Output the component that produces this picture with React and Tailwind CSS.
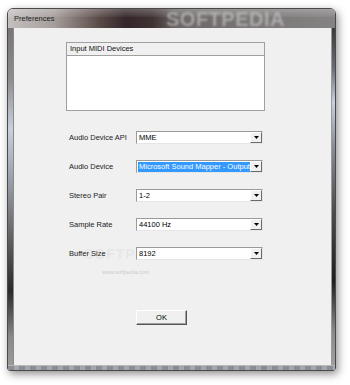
import React from "react";

const font = { fontFamily: '"Liberation Sans", Arial, sans-serif' };

function Combo({ value, selected }) {
  return (
    <div className="w-[127px] h-[13px] flex border border-t-[#9a9a9a] border-l-[#9a9a9a] border-b-[#e6e6e6] border-r-[#e6e6e6] bg-white">
      <div className="flex-1 flex items-center pl-[1px] pr-[1px] overflow-hidden">
        <span
          className={
            "text-[7.5px] leading-[10px] whitespace-nowrap px-[1px] " +
            (selected ? "bg-[#3399ff] text-white flex-1" : "text-black")
          }
        >
          {value}
        </span>
      </div>
      <div className="w-[12px] h-full flex items-center justify-center bg-[#f0f0f0] border border-t-white border-l-white border-b-[#6a6a6a] border-r-[#6a6a6a]">
        <svg width="5" height="3" viewBox="0 0 5 3">
          <path d="M0 0H5L2.5 3Z" fill="#000" />
        </svg>
      </div>
    </div>
  );
}

function Row({ label, value, selected }) {
  return (
    <div className="flex items-center h-[13px]">
      <div className="w-[67px] text-[7.5px] text-[#222] whitespace-nowrap">{label}</div>
      <Combo value={value} selected={selected} />
    </div>
  );
}

export default function App() {
  return (
    <div className="w-[350px] h-[385px] bg-white overflow-hidden" style={font}>
      <div className="ml-[7px] mt-[8px] w-[329px] h-[363px] flex flex-col rounded-t-[6px] rounded-b-[3px] border border-[#4a4a4a] shadow-[2px_3px_8px_rgba(0,0,0,0.45)] overflow-hidden">
        {/* Title bar */}
        <div className="relative h-[19px] shrink-0 bg-[linear-gradient(90deg,#c4c0c0_0%,#a69e9c_14%,#5a4a47_28%,#33252a_36%,#3f3232_44%,#6c6666_52%,#7a7676_75%,#858383_100%)] flex items-center pl-[6px]">
          <div className="absolute inset-x-0 top-0 h-[8px] bg-[linear-gradient(180deg,rgba(255,255,255,0.25),rgba(255,255,255,0.05))]" />
          <div className="absolute left-[158px] top-[1px] text-[20px] leading-[18px] font-bold text-[rgba(205,205,205,0.6)] tracking-[0.5px] blur-[1px] whitespace-nowrap">
            SOFTPEDIA
          </div>
          <span className="relative text-[7.5px] text-[#1c1c1c]">Preferences</span>
        </div>
        {/* Body */}
        <div className="flex flex-1">
          <div className="w-[5px] bg-[linear-gradient(180deg,#7a7474_0%,#8c8c90_15%,#c8d0dc_30%,#9aa0aa_45%,#6a6a6e_60%,#2a2a2c_78%,#8a8a8c_92%,#9a9a9a_100%)]" />
          <div className="w-[318px] bg-[#f0f0f0] border-l border-[#8a8a8a] pt-[14px] flex flex-col relative">
            <div className="absolute left-[70px] top-[216px] text-[14px] font-bold text-[rgba(200,200,200,0.25)] tracking-[1px] whitespace-nowrap">
              SOFTPEDIA
            </div>
            <div className="absolute left-[88px] top-[240px] text-[5.5px] text-[rgba(175,175,175,0.6)] whitespace-nowrap">
              www.softpedia.com
            </div>
            {/* list box */}
            <div className="relative ml-[52px] w-[199px] h-[69px] border border-[#a0a0a0] bg-white flex flex-col">
              <div className="h-[13px] bg-[#f0f0f0] border-b border-[#a0a0a0] flex items-center pl-[3px] text-[7.5px] text-[#111]">
                Input MIDI Devices
              </div>
            </div>
            <div className="relative mt-[20px] pl-[55px] flex flex-col gap-[16px]">
              <Row label="Audio Device API" value="MME" />
              <Row label="Audio Device" value="Microsoft Sound Mapper - Output" selected />
              <Row label="Stereo Pair" value="1-2" />
              <Row label="Sample Rate" value="44100 Hz" />
              <Row label="Buffer Size" value="8192" />
            </div>
            <div className="relative mt-[50px] ml-[122px] w-[51px] h-[15px] flex items-center justify-center bg-[#f0f0f0] border border-t-white border-l-white border-b-[#555] border-r-[#555] shadow-[inset_-1px_-1px_0_#a0a0a0] text-[7.5px] text-black">
              OK
            </div>
          </div>
          <div className="w-[4px] bg-[linear-gradient(180deg,#3a3a3c_0%,#6a6e76_12%,#c8d0e0_22%,#8a8e96_35%,#4a4a4c_55%,#1e1e20_75%,#8a8a8c_90%,#a0a0a0_100%)] border-l border-[#9a9a9a]" />
        </div>
        <div className="h-[5px] shrink-0 bg-[repeating-linear-gradient(90deg,#8a8e94_0px,#8a8e94_6px,#a4a8ae_6px,#a4a8ae_11px)] border-t border-[#b8b8b8]" />
      </div>
    </div>
  );
}
